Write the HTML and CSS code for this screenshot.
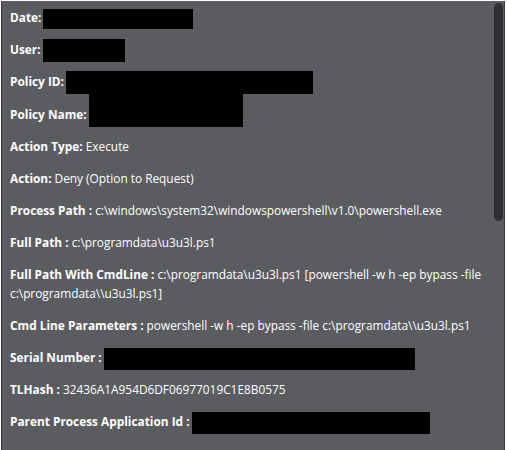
FILE: index.html
```html
<!DOCTYPE html>
<html>
<head>
<meta charset="utf-8">
<link rel="stylesheet" href="styles.css">
</head>
<body>
<div class="panel">
  <div class="content">
    <p class="row"><b>Date:</b><span class="redact" style="width:150px;height:20px"></span></p>
    <p class="row"><b>User:</b><span class="redact up" style="width:82px;height:23px"></span></p>
    <p class="row"><b>Policy ID:</b><span class="redact up" style="width:247px;height:23px"></span></p>
    <p class="row"><b>Policy Name:</b><span class="redact up" style="width:154px;height:33px"></span></p>
    <p class="row"><b>Action Type:</b> Execute</p>
    <p class="row"><b>Action:</b> Deny (Option to Request)</p>
    <p class="row"><b>Process Path :</b> c:\windows\system32\windowspowershell\v1.0\powershell.exe</p>
    <p class="row"><b>Full Path :</b> c:\programdata\u3u3l.ps1</p>
    <p class="row"><b>Full Path With CmdLine :</b> c:\programdata\u3u3l.ps1 [powershell -w h -ep bypass -file c:\programdata\\u3u3l.ps1]</p>
    <p class="row"><b>Cmd Line Parameters :</b> powershell -w h -ep bypass -file c:\programdata\\u3u3l.ps1</p>
    <p class="row"><b>Serial Number :</b><span class="redact" style="width:311px;height:22px"></span></p>
    <p class="row"><b>TLHash :</b> 32436A1A954D6DF06977019C1E8B0575</p>
    <p class="row"><b>Parent Process Application Id :</b><span class="redact" style="width:238px;height:22px"></span></p>
  </div>
  <div class="thumb"></div>
</div>
</body>
</html>
```
FILE: styles.css
```css
html, body {
  margin: 0;
  padding: 0;
  background: #ffffff;
  height: 100%;
  overflow: hidden;
}
.panel {
  position: relative;
  margin: 1px 2px 0 1px;
  height: 449px;
  background: #5b5c60;
  border-left: 1px solid #3a3b3e;
  border-right: 1px solid #3a3b3e;
  overflow: hidden;
}
.content {
  padding: 7px 10px 0 8px;
  color: #ffffff;
  font-family: "Open Sans", Lato, sans-serif;
  font-size: 11.85px;
}
.row {
  margin: 0 0 13px 0;
  line-height: 19px;
}
.row b {
  font-weight: 700;
}
.redact {
  display: inline-block;
  background: #000000;
  vertical-align: middle;
  margin: -10px 0 -10px 2px;
}
.redact.up {
  vertical-align: 2px;
}
.thumb {
  position: absolute;
  top: 2px;
  right: 1px;
  width: 9px;
  height: 218px;
  background: #2f3033;
  border-radius: 5px;
}
```
